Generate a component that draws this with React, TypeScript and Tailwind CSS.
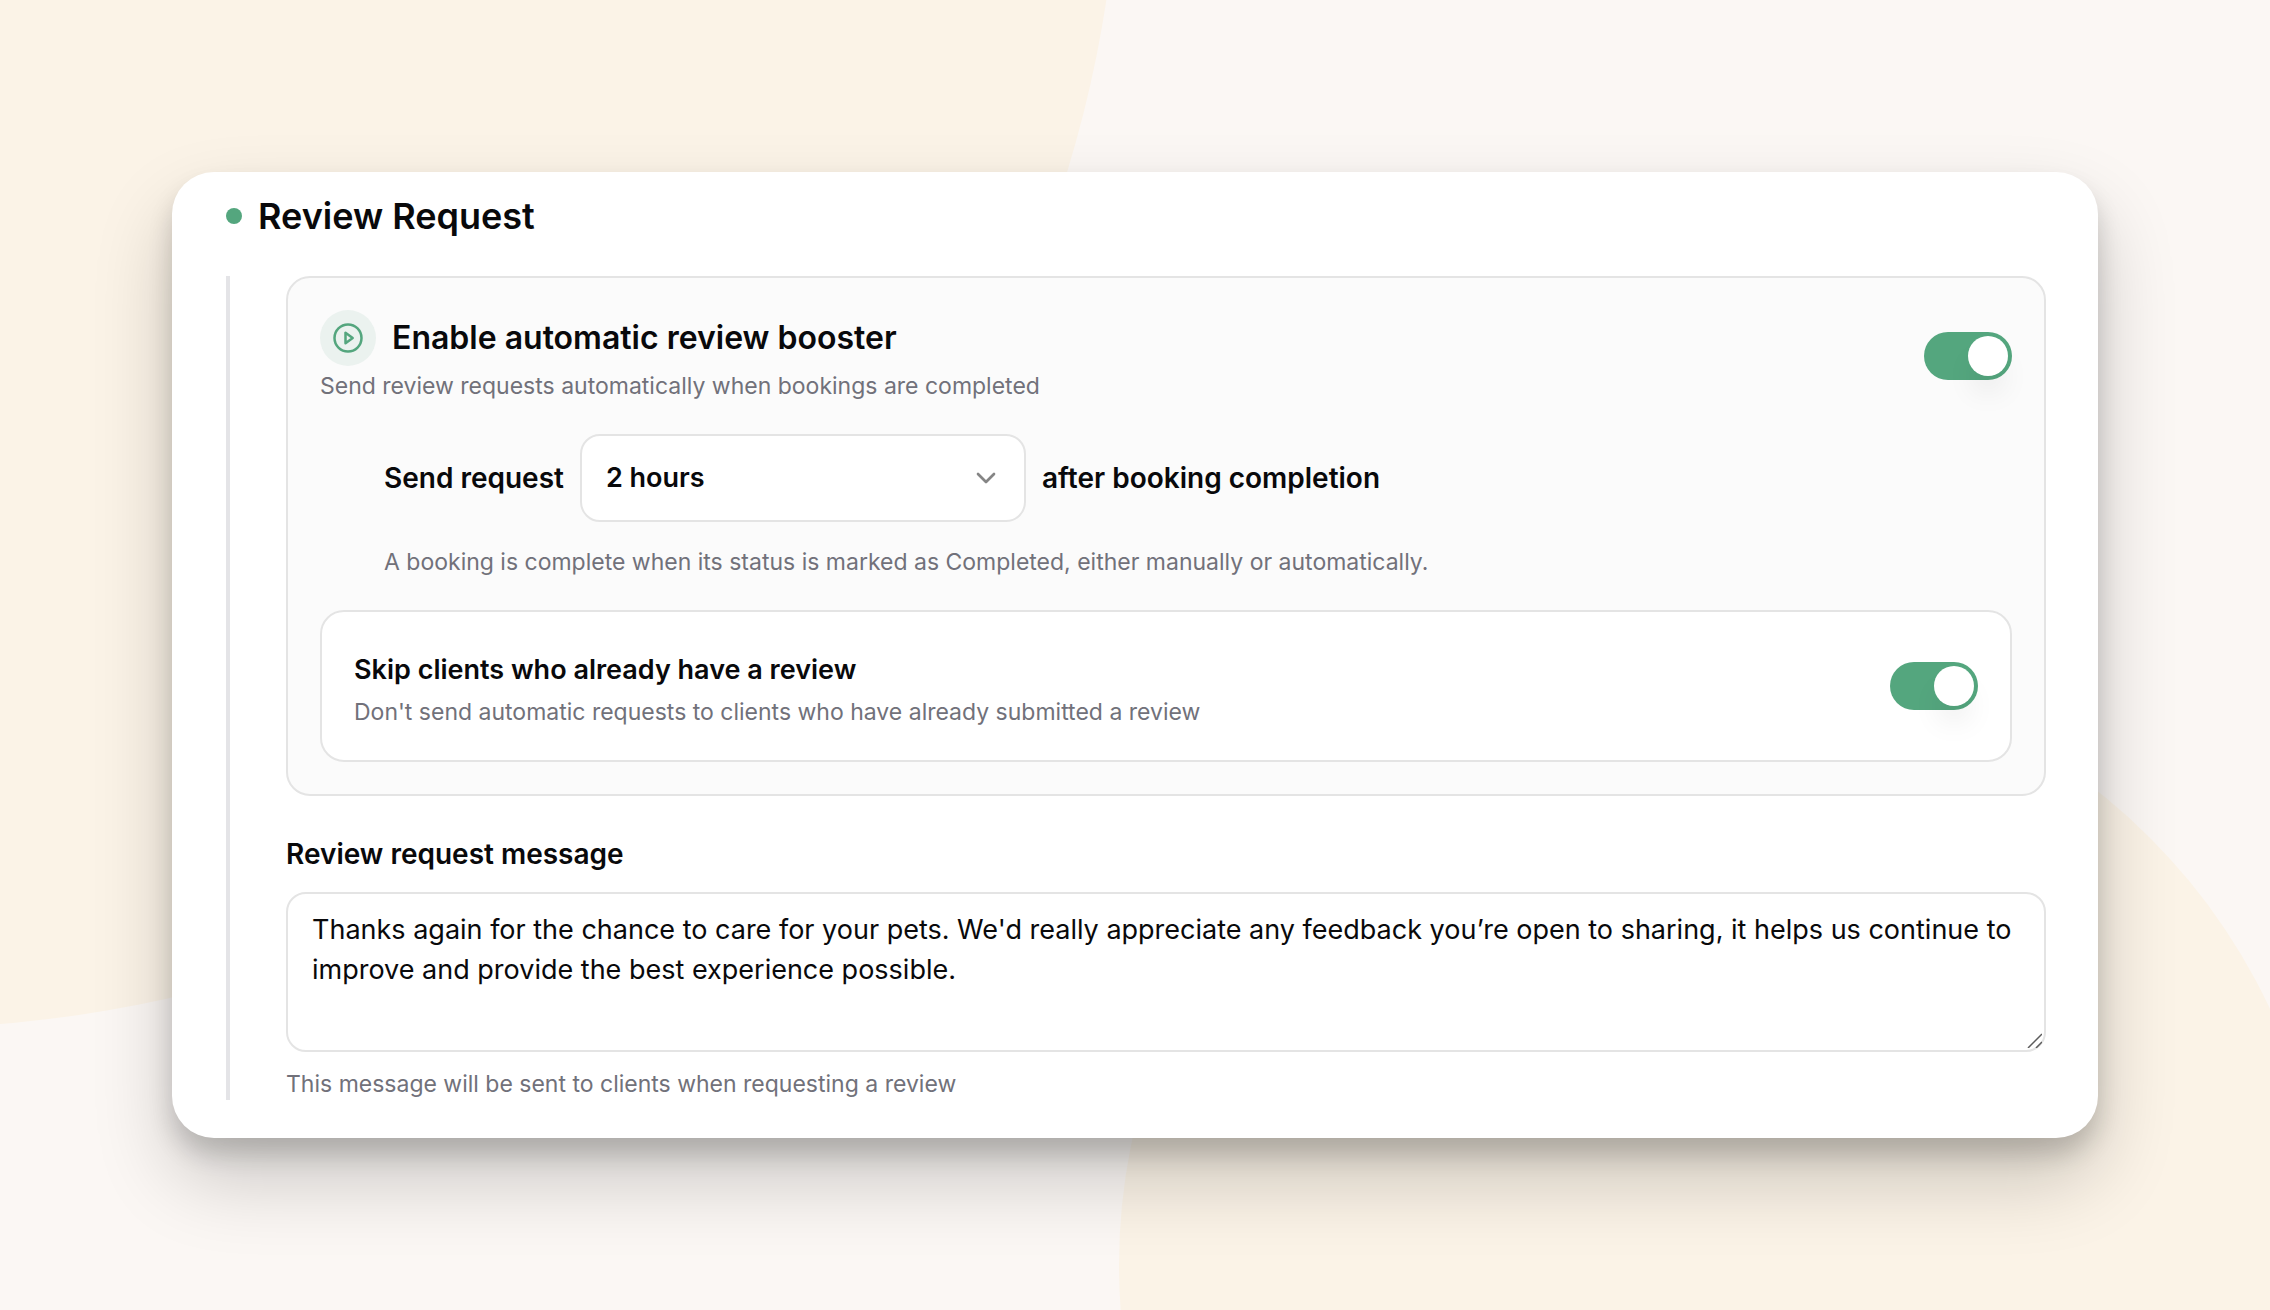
import { useState } from 'react'
import { ChevronDown } from 'lucide-react'

const delays = ['1 hour', '2 hours', '4 hours', '12 hours', '24 hours']

const defaultMessage =
  "Thanks again for the chance to care for your pets. We'd really appreciate any feedback you’re open to sharing, it helps us continue to improve and provide the best experience possible."

function Backdrop() {
  return (
    <svg
      className="absolute inset-0 h-full w-full"
      viewBox="0 0 2270 1310"
      preserveAspectRatio="none"
      aria-hidden="true"
    >
      <ellipse cx="-100" cy="-180" rx="1220" ry="1208" fill="#fbf3e7" />
      <circle cx="1723" cy="1265" r="604" fill="#fbf3e7" />
    </svg>
  )
}

function PlayBadge() {
  return (
    <span className="flex size-14 shrink-0 items-center justify-center rounded-full bg-[#ebf2ef]">
      <svg
        className="size-8 text-[#54a67e]"
        viewBox="0 0 32 32"
        fill="none"
        stroke="currentColor"
        strokeWidth="2.5"
        strokeLinejoin="round"
        aria-hidden="true"
      >
        <circle cx="16" cy="16" r="13.5" />
        <path d="M13.5 10.8v10.4l7.2-5.2z" />
      </svg>
    </span>
  )
}

function Toggle({ id, defaultChecked }: { id: string; defaultChecked?: boolean }) {
  return (
    <input
      id={id}
      type="checkbox"
      role="switch"
      defaultChecked={defaultChecked}
      className="flex h-12 w-22 shrink-0 cursor-pointer appearance-none items-center rounded-full bg-[#e4e4e7] p-1 before:size-10 before:rounded-full before:bg-white before:shadow-[0_20px_30px_-6px_rgba(0,0,0,0.1)] checked:justify-end checked:bg-[#54a67e]"
    />
  )
}

export default function App() {
  const [delay, setDelay] = useState('2 hours')
  const [message, setMessage] = useState(defaultMessage)

  return (
    <main className="relative flex min-h-screen flex-col justify-center overflow-hidden bg-[#fbf7f4] p-43 font-['Inter',sans-serif] text-[#09090b]">
      <Backdrop />

      <section className="relative rounded-[42px] bg-white pt-5 pr-13 pb-[38px] pl-[54px] shadow-[0_16px_24px_rgba(0,0,0,0.16),0_40px_80px_rgba(0,0,0,0.2)]">
        <header className="flex items-center gap-4">
          <span className="size-4 rounded-full bg-[#54a67e]" />
          <h1 className="text-[36px] leading-[48px] font-semibold">Review Request</h1>
        </header>

        <div className="mt-9 border-l-4 border-[#e4e4e7] pl-14">
          <div className="rounded-3xl border-2 border-[#e4e4e4] bg-[#fbfbfb] p-8">
            <div className="flex items-center justify-between gap-8">
              <div>
                <div className="flex items-center gap-4">
                  <PlayBadge />
                  <label htmlFor="booster" className="text-[32px] leading-[40px] font-semibold">
                    Enable automatic review booster
                  </label>
                </div>
                <p className="mt-1 text-[23px] leading-[32px] text-[#71717a]">
                  Send review requests automatically when bookings are completed
                </p>
              </div>
              <Toggle id="booster" defaultChecked />
            </div>

            <div className="mt-8 pl-16">
              <div className="flex items-center gap-4 text-[28px] leading-[40px] font-semibold">
                <label htmlFor="delay">Send request</label>
                <div className="relative w-[446px]">
                  <select
                    id="delay"
                    value={delay}
                    onChange={(e) => setDelay(e.target.value)}
                    className="h-22 w-full appearance-none rounded-[20px] border-2 border-[#e4e4e4] bg-white px-6 text-[27px] font-semibold"
                  >
                    {delays.map((d) => (
                      <option key={d}>{d}</option>
                    ))}
                  </select>
                  <ChevronDown className="pointer-events-none absolute inset-y-0 right-6 my-auto size-8 text-[#858585]" />
                </div>
                <span>after booking completion</span>
              </div>
              <p className="mt-6 text-[23px] leading-[32px] text-[#71717a]">
                A booking is complete when its status is marked as Completed, either manually or automatically.
              </p>
            </div>

            <div className="mt-8 flex items-center justify-between gap-8 rounded-3xl border-2 border-[#e4e4e4] bg-white p-8">
              <div>
                <label htmlFor="skip" className="block text-[27px] leading-[52px] font-semibold">
                  Skip clients who already have a review
                </label>
                <p className="text-[23px] leading-[32px] text-[#71717a]">
                  Don't send automatic requests to clients who have already submitted a review
                </p>
              </div>
              <Toggle id="skip" defaultChecked />
            </div>
          </div>

          <label htmlFor="message" className="mt-10 block text-[28px] leading-[36px] font-semibold">
            Review request message
          </label>
          <div className="relative mt-5">
            <textarea
              id="message"
              value={message}
              onChange={(e) => setMessage(e.target.value)}
              className="block h-40 w-full resize-none rounded-[20px] border-2 border-[#e4e4e4] bg-white px-6 py-4 text-[27px] leading-[40px]"
            />
            <svg
              className="pointer-events-none absolute right-1 bottom-1 size-4"
              viewBox="0 0 16 16"
              stroke="#5c5c5c"
              strokeWidth="1.5"
              aria-hidden="true"
            >
              <path d="M2 16 16 2M10 16l6-6" />
            </svg>
          </div>
          <p className="mt-4 text-[23px] leading-[32px] text-[#71717a]">
            This message will be sent to clients when requesting a review
          </p>
        </div>
      </section>
    </main>
  )
}
